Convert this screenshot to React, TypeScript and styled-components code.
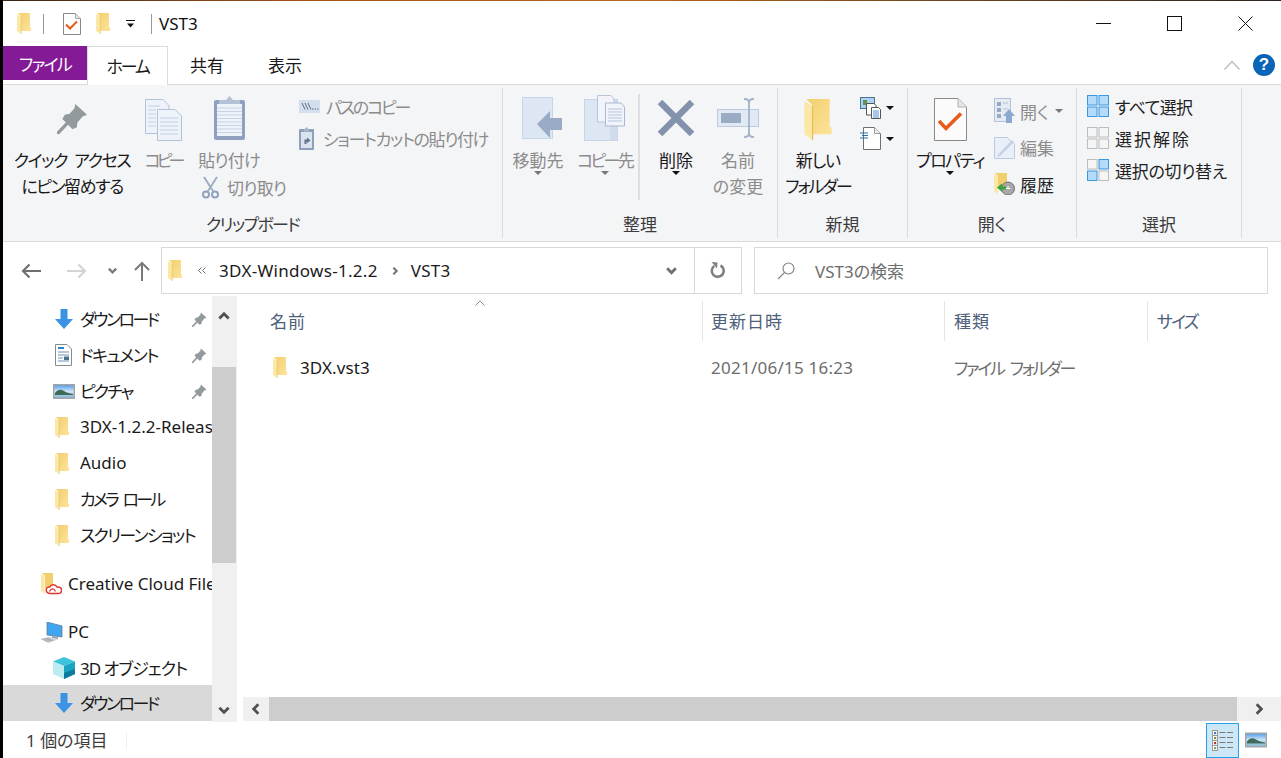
import React, { useId } from "react";
import styled, { createGlobalStyle, css } from "styled-components";

const GlobalStyle = createGlobalStyle`
  html, body {
    margin: 0;
    padding: 0;
    background: #fff;
  }
  body {
    font-family: "Noto Sans", "Noto Sans CJK JP", sans-serif;
    font-size: 17px;
    font-feature-settings: "palt" 1;
    color: #1a1a1a;
    overflow: hidden;
  }
`;

// the reference font has narrow kana, so each label carries its own tracking
const tracking = css<{ $ls?: number }>`
  letter-spacing: ${(p) => p.$ls ?? 0}px;
  word-spacing: ${(p) => ((p.$ls ?? 0) < -1 ? 4 : 0)}px;
`;

const Screen = styled.div`
  width: 1281px;
  height: 758px;
  display: flex;
  flex-direction: column;
  overflow: hidden;
  border-left: 3px solid #000;
  box-sizing: border-box;
  position: relative;
`;

const TopStrip = styled.div`
  height: 1px;
  margin-left: -3px;
  flex: none;
  background: linear-gradient(90deg, #3a2412 0%, #a5551c 25%, #b8651f 50%, #7a4a1e 70%, #2b2320 100%);
`;

const TitleBar = styled.div`
  height: 45px;
  flex: none;
  display: flex;
  align-items: center;
`;

const QuickIcons = styled.div`
  display: flex;
  align-items: center;
  padding-left: 14px;
`;

const QuickGap = styled.span<{ $w: number }>`
  width: ${(p) => p.$w}px;
  flex: none;
`;

const TitleSep = styled.span<{ $gap: number; $gapR: number }>`
  width: 1px;
  height: 20px;
  background: #9a9a9a;
  margin: 0 ${(p) => p.$gapR}px 0 ${(p) => p.$gap}px;
`;

const TitleText = styled.span`
  color: #111;
`;

const WindowButtons = styled.div`
  margin-left: auto;
  display: flex;
  height: 100%;
`;

const WindowButton = styled.div`
  width: 71px;
  display: flex;
  align-items: center;
  justify-content: center;
`;

const TabRow = styled.div`
  height: 39px;
  flex: none;
  display: flex;
  box-sizing: border-box;
  border-bottom: 1px solid #dadbdc;
  position: relative;
`;

const FileTab = styled.div<{ $ls?: number }>`
  ${tracking}
  width: 84px;
  height: 34px;
  background: #841a96;
  color: #fff;
  display: flex;
  align-items: center;
  justify-content: center;
`;

const Tab = styled.div<{ $active?: boolean; $ls?: number }>`
  ${tracking}
  width: ${(p) => (p.$active ? 81 : 78)}px;
  height: ${(p) => (p.$active ? 39 : 38)}px;
  box-sizing: border-box;
  display: flex;
  align-items: center;
  justify-content: center;
  padding-bottom: 2px;
  background: #fff;
  ${(p) => p.$active && "border: 1px solid #dadbdc; border-bottom: none;"}
`;

const TabRight = styled.div`
  margin-left: auto;
  display: flex;
  align-items: center;
  gap: 13px;
  padding-right: 6px;
`;

const HelpBadge = styled.div`
  width: 22px;
  height: 22px;
  border-radius: 50%;
  background: #0a64b8;
  color: #fff;
  font-weight: 700;
  font-size: 17px;
  display: flex;
  align-items: center;
  justify-content: center;
  font-family: "Liberation Sans", sans-serif;
`;

const Ribbon = styled.div`
  height: 157px;
  flex: none;
  display: flex;
  background: #f4f5f7;
  border-bottom: 1px solid #dadbdc;
  box-sizing: border-box;
  padding-top: 3px;
`;

const Group = styled.div<{ $w: number }>`
  width: ${(p) => p.$w}px;
  height: 150px;
  box-sizing: border-box;
  border-right: 1px solid #dadbdc;
  display: flex;
  flex-direction: column;
  flex: none;
`;

const GroupBody = styled.div`
  flex: 1;
  display: flex;
  align-items: flex-start;
`;

const GroupLabel = styled.div<{ $ls?: number }>`
  ${tracking}
  height: 26px;
  text-align: center;
  line-height: 26px;
  color: #3c3c3c;
`;

const BigButton = styled.div<{ $w: number; $ml?: number }>`
  width: ${(p) => p.$w}px;
  margin-left: ${(p) => p.$ml ?? 0}px;
  flex: none;
  display: flex;
  flex-direction: column;
  align-items: center;
`;

const BigIcon = styled.div<{ $shift?: number; $drop?: number }>`
  height: 60px;
  box-sizing: border-box;
  display: flex;
  align-items: center;
  justify-content: center;
  margin-left: ${(p) => p.$shift ?? 0}px;
  padding-top: ${(p) => p.$drop ?? 0}px;
`;

const BigLabel = styled.div<{ $off?: boolean; $ls?: number }>`
  ${tracking}
  line-height: 26px;
  height: 26px;
  white-space: nowrap;
  color: ${(p) => (p.$off ? "#8c8c8c" : "#1a1a1a")};
`;

const Caret = styled.span<{ $off?: boolean }>`
  display: block;
  width: 0;
  height: 0;
  border-left: 4px solid transparent;
  border-right: 4px solid transparent;
  border-top: 4px solid ${(p) => (p.$off ? "#777" : "#111")};
`;

const LabelCaret = styled(Caret)`
  margin-top: -3px;
`;

const OpenCaret = styled(Caret)`
  margin-left: 6px;
`;

const PasteStack = styled.div`
  width: 95px;
  margin-left: 4px;
  flex: none;
`;

const SmallColumn = styled.div<{ $top: number; $ml: number; $row: number }>`
  margin-left: ${(p) => p.$ml}px;
  padding-top: ${(p) => p.$top}px;
  display: flex;
  flex-direction: column;
  --row: ${(p) => p.$row}px;
`;

const SmallRow = styled.div<{ $off?: boolean; $iconW?: number; $ls?: number }>`
  ${tracking}
  height: var(--row, 32px);
  display: flex;
  align-items: center;
  white-space: nowrap;
  color: ${(p) => (p.$off ? "#8c8c8c" : "#1f1f1f")};
  & > svg:first-child {
    flex: none;
    margin-right: ${(p) => p.$iconW ?? 6}px;
  }
`;

const CutRow = styled(SmallRow)`
  --row: 26px;
  padding-left: 5px;
`;

const MiniCaretRow = styled.div`
  height: 31px;
  display: flex;
  align-items: center;
  gap: 5px;
`;

const VSep = styled.div`
  width: 2px;
  height: 106px;
  margin: 6px 1px 0 2px;
  background: #dddee1;
  flex: none;
`;

const NavBar = styled.div`
  height: 54px;
  flex: none;
  display: flex;
  align-items: center;
  box-sizing: border-box;
  padding-top: 3px;
`;

const NavIcon = styled.div<{ $w: number }>`
  width: ${(p) => p.$w}px;
  flex: none;
  display: flex;
  justify-content: center;
`;

const AddressBox = styled.div`
  width: 581px;
  height: 47px;
  margin-left: 6px;
  box-sizing: border-box;
  border: 1px solid #d9d9d9;
  display: flex;
  align-items: center;
  padding-left: 6px;
  flex: none;
`;

const Crumb = styled.span`
  color: #1a1a1a;
  white-space: nowrap;
  letter-spacing: 0.3px;
`;

const BreadSep = styled.span<{ $l: number; $r: number }>`
  display: flex;
  margin: 0 ${(p) => p.$r}px 0 ${(p) => p.$l}px;
`;

const AddressEnd = styled.div`
  margin-left: auto;
  height: 100%;
  display: flex;
  align-items: center;
`;

const AddressDrop = styled.div`
  width: 47px;
  height: 100%;
  display: flex;
  align-items: center;
  justify-content: center;
  box-sizing: border-box;
  border-right: 1px solid #d9d9d9;
`;

const RefreshCell = styled.div`
  width: 46px;
  display: flex;
  justify-content: center;
`;

const SearchBox = styled.div`
  width: 514px;
  height: 47px;
  margin-left: 12px;
  box-sizing: border-box;
  border: 1px solid #d9d9d9;
  display: flex;
  align-items: center;
  padding-left: 22px;
  gap: 20px;
  color: #6d6d6d;
`;

const Main = styled.div`
  height: 426px;
  flex: none;
  display: flex;
`;

const Sidebar = styled.div`
  width: 209px;
  flex: none;
  overflow: hidden;
  padding-top: 5px;
  box-sizing: border-box;
`;

const NavRow = styled.div<{ $top?: boolean; $selected?: boolean; $gap?: number }>`
  height: 36px;
  display: flex;
  align-items: center;
  padding-left: ${(p) => (p.$top ? 37 : 49)}px;
  margin-top: ${(p) => p.$gap ?? 0}px;
  background: ${(p) => (p.$selected ? "#d9d9d9" : "transparent")};
  white-space: nowrap;
  overflow: hidden;
  color: #1a1a1a;
`;

const NavSlot = styled.span<{ $folder?: boolean }>`
  width: 23px;
  margin-right: 5px;
  flex: none;
  box-sizing: border-box;
  display: flex;
  align-items: center;
  justify-content: ${(p) => (p.$folder ? "flex-start" : "center")};
  padding-left: ${(p) => (p.$folder ? 3 : 0)}px;
`;

const NavText = styled.span<{ $ls?: number }>`
  ${tracking}
  flex: 1;
  min-width: 0;
  overflow: hidden;
  padding-bottom: 2px;
`;

const NavPin = styled.span`
  flex: none;
  display: flex;
  margin-right: 5px;
`;

const VScroll = styled.div`
  width: 25px;
  flex: none;
  background: #f0f0f0;
  display: flex;
  flex-direction: column;
`;

const ScrollEnd = styled.div`
  height: 71px;
  display: flex;
  justify-content: center;
  padding: 12px 1px 0 0;
  box-sizing: border-box;
`;

const ScrollEndBottom = styled.div`
  flex: 1;
  display: flex;
  justify-content: center;
  align-items: flex-end;
  padding: 0 1px 5px 0;
`;

const VThumb = styled.div`
  height: 196px;
  width: 24px;
  background: #cdcdcd;
`;

const FilePane = styled.div`
  flex: 1;
  margin-left: 6px;
  display: flex;
  flex-direction: column;
  min-width: 0;
`;

const COLUMNS = "460px 242px 203px 1fr";

const Header = styled.div`
  display: grid;
  grid-template-columns: ${COLUMNS};
  padding-top: 5px;
  height: 50px;
  box-sizing: border-box;
  position: relative;
  flex: none;
`;

const HeaderCell = styled.div<{ $pad: number; $last?: boolean; $ls?: number }>`
  ${tracking}
  height: 40px;
  box-sizing: border-box;
  padding: 0 0 2px ${(p) => p.$pad}px;
  display: flex;
  align-items: center;
  color: #4c607a;
  ${(p) => !p.$last && "border-right: 1px solid #e5e5e5;"}
`;

const SortCaret = styled.span`
  position: absolute;
  left: 232px;
  top: 4px;
  display: flex;
`;

const FileList = styled.div`
  flex: 1;
  padding-top: 3px;
`;

const FileRow = styled.div`
  display: grid;
  grid-template-columns: ${COLUMNS};
  height: 36px;
  align-items: center;
`;

const FileName = styled.div`
  display: flex;
  align-items: center;
  padding-left: 30px;
  gap: 13px;
  color: #1a1a1a;
  letter-spacing: 0.1px;
`;

const FileMeta = styled.div<{ $pad: number; $ls?: number }>`
  ${tracking}
  padding-left: ${(p) => p.$pad}px;
  color: #6d6d6d;
  white-space: nowrap;
`;

const HScroll = styled.div`
  height: 24px;
  margin-bottom: 1px;
  flex: none;
  background: #f0f0f0;
  display: flex;
  align-items: center;
`;

const HEnd = styled.div`
  width: 26px;
  flex: none;
  display: flex;
  justify-content: center;
`;

const HEndRight = styled(HEnd)`
  flex: 1;
`;

const HThumb = styled.div`
  width: 968px;
  height: 24px;
  background: #cdcdcd;
`;

const StatusBar = styled.div`
  flex: 1;
  display: flex;
  align-items: center;
  padding-left: 23px;
  color: #3c3c3c;
`;

const StatusText = styled.span`
  width: 100px;
  flex: none;
  white-space: nowrap;
  padding-bottom: 2px;
`;

const StatusSep = styled.span`
  width: 1px;
  height: 17px;
  background: #f0f0f0;
`;

const ViewButtons = styled.div`
  margin-left: auto;
  display: flex;
  align-items: center;
  padding-right: 14px;
  gap: 6px;
  height: 100%;
`;

const ViewButton = styled.div`
  width: 33px;
  height: 35px;
  box-sizing: border-box;
  background: #cce8f6;
  border: 1px solid #26a0e8;
  display: flex;
  align-items: center;
  justify-content: center;
`;

function Folder({ w = 14, h = 21 }: { w?: number; h?: number }) {
  const id = useId();
  return (
    <svg width={w} height={h} viewBox="0 0 14 21">
      <defs>
        <linearGradient id={id} x1="0" y1="0" x2="1" y2="1">
          <stop offset="0" stopColor="#f2cf6e" />
          <stop offset="1" stopColor="#fde39a" />
        </linearGradient>
      </defs>
      <path d="M1 0H13V14.5H14V18H4V3Z" fill={`url(#${id})`} />
      <path d="M0 1 4.2 3.6V21L0 18Z" fill="#fbe7a6" />
      <path d="M4.2 3.6V21" stroke="#e5bd5a" strokeWidth=".6" />
    </svg>
  );
}

function Pin({ w = 31, h = 31, color = "#929a9e" }: { w?: number; h?: number; color?: string }) {
  return (
    <svg width={w} height={h} viewBox="0 0 32 32">
      <path d="M19 1 31 12 26.5 14 21 20 20.5 25 16 27 5.5 16.5 8 12 13 11 18 5.5Z" fill={color} />
      <path d="M10.5 21 1 31" stroke={color} strokeWidth="3.4" strokeLinecap="round" />
    </svg>
  );
}

function CopyIcon() {
  const s = "#b3c2d8";
  return (
    <svg width="37" height="42" viewBox="0 0 37 42">
      <path d="M.5.5H18L24 6.5V34.5H.5Z" fill="#eef2f9" stroke={s} />
      <path d="M12.5 10.5H30L36.5 17V41.5H12.5Z" fill="#eef2f9" stroke={s} />
      <path d="M3 7H15M3 11H11M3 15H11M3 19H11M3 23H11M3 27H11M15 19H33M15 23H33M15 27H33M15 31H33M15 35H33" stroke="#c3cfe0" />
    </svg>
  );
}

function ClipboardIcon() {
  return (
    <svg width="31" height="44" viewBox="0 0 31 44">
      <rect x="0" y="4" width="31" height="40" rx="2" fill="#90a1bf" />
      <rect x="3" y="8" width="25" height="32" fill="#eef2f9" />
      <path d="M3 12H28M3 15.500H28M3 19H28M3 22.500H28M3 26H28M3 29.500H28M3 33H28M3 36.500H28" stroke="#c8d3e4" />
      <path d="M15.500 0 19 4H26L26 8H5V4H12Z" fill="#b4c1d6" />
    </svg>
  );
}

function Scissors() {
  return (
    <svg width="17" height="23" viewBox="0 0 17 23">
      <path d="M2 1 11 15M15 1 6 15" stroke="#9dadc4" strokeWidth="2" />
      <circle cx="4" cy="18.500" r="3" fill="none" stroke="#8fa2bd" strokeWidth="2" />
      <circle cx="13" cy="18.500" r="3" fill="none" stroke="#8fa2bd" strokeWidth="2" />
    </svg>
  );
}

function PathCopy() {
  return (
    <svg width="21" height="13" viewBox="0 0 21 13">
      <rect width="21" height="13" fill="#d5deec" />
      <path d="M3 3 6 9.500M6 3 9 9.500M9 3 12 9.500" stroke="#5f6f86" />
      <path d="M13 9H14.500M15.500 9H17M18 9H19.500" stroke="#5f6f86" />
    </svg>
  );
}

function ShortcutPaste() {
  return (
    <svg width="15" height="23" viewBox="0 0 15 23">
      <rect y="2" width="15" height="21" rx="1" fill="#8e9fbc" />
      <rect x="2" y="5" width="11" height="16" fill="#dbe3ef" />
      <path d="M7.500 0 10 2.500V4.500H5V2.500Z" fill="#a9b7cd" />
      <path d="M5.500 17V12.500H8V10.500L11.500 13.500 8 16V14.500H7.500V17Z" fill="#5f708c" />
    </svg>
  );
}

function MoveTo() {
  return (
    <svg width="40" height="43" viewBox="0 0 40 43">
      <rect x=".5" y=".5" width="30" height="41" fill="#dde6f3" stroke="#c8d5e8" />
      <path d="M15 27 28 14V21H40V33H28V41Z" fill="#9aabc6" />
    </svg>
  );
}

function CopyTo() {
  return (
    <svg width="41" height="46" viewBox="0 0 41 46">
      <rect x=".5" y="4.500" width="33" height="41" fill="#dde6f3" stroke="#c8d5e8" />
      <rect x="26" y="4.500" width="7" height="41" fill="#d0dcec" />
      <path d="M13.500.5H27L30 4V27H13.500Z" fill="#f1f4fa" stroke="#b7c5da" />
      <path d="M21.500 8H37L40.500 12V31H21.500Z" fill="#f1f4fa" stroke="#a9b9d1" />
      <path d="M24 14H38M24 17H38M24 20H38M24 23H38M24 26H38" stroke="#b7c5da" />
    </svg>
  );
}

function Rename() {
  return (
    <svg width="42" height="40" viewBox="0 0 42 40">
      <rect x=".5" y="11.500" width="41" height="17" fill="#e1e9f5" stroke="#bccae0" />
      <rect x="4" y="15" width="20" height="10" fill="#9aabc6" />
      <path d="M27 1C31 1 32 2 32 6V34C32 38 31 39 27 39M37 1C33 1 32 2 32 6M32 34C32 38 33 39 37 39" fill="none" stroke="#a4b3ca" strokeWidth="1.8" />
    </svg>
  );
}

function CopySmall() {
  return (
    <svg width="21" height="22" viewBox="0 0 21 22">
      <rect x=".5" y=".5" width="14" height="11" fill="#a9d3f4" stroke="#4f6f93" />
      <rect x="3" y="3" width="4" height="5" fill="#6c8f4f" />
      <path d="M6.500 6.500H14L16 8.500V18H6.500Z" fill="#fff" stroke="#555" />
      <path d="M11.500 10.500H18.500L20.500 12.500V21.500H11.500Z" fill="#fff" stroke="#555" />
      <path d="M13 14H19M13 16H19M13 18H19M13 20H19" stroke="#4d8fd4" />
    </svg>
  );
}

function NewItem() {
  return (
    <svg width="21" height="23" viewBox="0 0 21 23">
      <path d="M3.500.5H14.500L20.500 6.500V22.500H3.500Z" fill="#fff" stroke="#6f6f6f" />
      <path d="M14.500.5V6.500H20.500" fill="#eee" stroke="#9a9a9a" />
      <path d="M0 6H8M2 8.500H8M0 11H8" stroke="#2a6fb0" />
    </svg>
  );
}

function PropertiesDoc() {
  return (
    <svg width="33" height="43" viewBox="0 0 33 43">
      <path d="M.5.5H24L32.500 9V42.500H.5Z" fill="#fbfbfb" stroke="#8a8a8a" />
      <path d="M24 .5V9H32.500" fill="#e5e5e5" stroke="#b0b0b0" />
      <path d="M5 23 12 30.500 27 15.500" fill="none" stroke="#ea5a1d" strokeWidth="3.600" />
    </svg>
  );
}

function OpenIcon() {
  return (
    <svg width="21" height="26" viewBox="0 0 21 26">
      <rect x=".5" y=".5" width="16" height="23" fill="#e4ebf5" stroke="#b3c0d5" />
      <path d="M3 4H7V8H3ZM3 10H7V14H3ZM3 16H7V20H3Z" fill="#9aa8bf" />
      <path d="M9 5H14M9 11H14" stroke="#b3c0d5" />
      <path d="M9 18 15 11 21 18H18V25H12V18Z" fill="#8fa8cf" />
    </svg>
  );
}

function EditIcon() {
  return (
    <svg width="21" height="22" viewBox="0 0 21 22">
      <path d="M.5.5H13L20.500 7V21.500H.5Z" fill="#e9eff8" stroke="#bdcae0" />
      <path d="M4 18 18 3 20 5 6 19 3 20Z" fill="#c5d1e3" />
    </svg>
  );
}

function HistoryIcon() {
  return (
    <svg width="21" height="22" viewBox="0 0 21 22">
      <path d="M1 0H13V16H4V3Z" fill="#f2cf6e" />
      <path d="M0 1 4 3V21L0 18Z" fill="#fbe7a6" />
      <circle cx="14" cy="15.500" r="6.500" fill="#a8a8a8" stroke="#6f6f6f" />
      <path d="M11.500 15.500H16.500M14 13V16" stroke="#fff" />
      <path d="M3 14.500 8 10.500V13.500H12V16.500H8V19Z" fill="#3ba43b" />
    </svg>
  );
}

function SelectGrid({ on }: { on: boolean[] }) {
  const cells: [number, number][] = [[0, 0], [11.5, 0], [0, 11.5], [11.5, 11.5]];
  return (
    <svg width="22" height="22" viewBox="0 0 22 22">
      {cells.map(([x, y], i) => (
        <rect
          key={i}
          x={x + 0.5}
          y={y + 0.5}
          width="9.500"
          height="9.500"
          fill={on[i] ? "#b5dbfb" : "#f4f5f7"}
          stroke={on[i] ? "#3a98e0" : "#bdbdbd"}
        />
      ))}
    </svg>
  );
}

function Chevron({ dir, size = 12, color = "#6f6f6f", sw = 2.6 }: { dir: "up" | "down" | "left" | "right"; size?: number; color?: string; sw?: number }) {
  const d = {
    up: "M2 9 6 5 10 9",
    down: "M2 4 6 8 10 4",
    left: "M8 2 4 6 8 10",
    right: "M4 2 8 6 4 10",
  }[dir];
  return (
    <svg width={size} height={size} viewBox="0 0 12 12">
      <path d={d} fill="none" stroke={color} strokeWidth={sw} />
    </svg>
  );
}

function ArrowLeft({ color }: { color: string }) {
  return (
    <svg width="20" height="16" viewBox="0 0 20 16">
      <path d="M20 8H2M8.500 1.500 2 8 8.500 14.500" fill="none" stroke={color} strokeWidth="2.200" />
    </svg>
  );
}

function ArrowRight({ color }: { color: string }) {
  return (
    <svg width="20" height="16" viewBox="0 0 20 16">
      <path d="M0 8H18M11.500 1.500 18 8 11.500 14.500" fill="none" stroke={color} strokeWidth="2.200" />
    </svg>
  );
}

function ArrowUp() {
  return (
    <svg width="16" height="20" viewBox="0 0 16 20">
      <path d="M8 20V2M1 9 8 2 15 9" fill="none" stroke="#7a7a7a" strokeWidth="2" />
    </svg>
  );
}

function Refresh() {
  return (
    <svg width="16" height="19" viewBox="0 0 16 19">
      <path d="M10.500 4.500A6 6 0 1 1 4.200 5" fill="none" stroke="#7f7f7f" strokeWidth="2.600" />
      <path d="M1.500 1 7.500 1.500 7 7.500Z" fill="#7f7f7f" />
    </svg>
  );
}

function Magnifier() {
  return (
    <svg width="18" height="18" viewBox="0 0 18 18">
      <circle cx="11.500" cy="6.500" r="5.500" fill="none" stroke="#7d7d7d" strokeWidth="1.100" />
      <path d="M7.500 10.500 1 17" stroke="#7d7d7d" strokeWidth="1.100" />
    </svg>
  );
}

function DownloadArrow() {
  return (
    <svg width="18" height="20" viewBox="0 0 18 20">
      <path d="M5.500 0H12.500V10H18L9 20 0 10H5.500Z" fill="#3b93e6" />
    </svg>
  );
}

function DocsIcon() {
  return (
    <svg width="17" height="22" viewBox="0 0 17 22">
      <path d="M.5.5H12L16.500 5V21.500H.5Z" fill="#fff" stroke="#8a8a8a" />
      <path d="M3 4H9" stroke="#2f80d8" strokeWidth="2" />
      <path d="M3 8H14M3 11H14M3 14H8M3 17H14" stroke="#6f8fb5" />
      <rect x="9" y="12.500" width="5" height="3.500" fill="#47708c" />
    </svg>
  );
}

function PictureIcon({ w = 22, h = 15 }: { w?: number; h?: number }) {
  const id = useId();
  return (
    <svg width={w} height={h} viewBox="0 0 22 15">
      <defs>
        <linearGradient id={id} x1="0" y1="0" x2="0" y2="1">
          <stop offset="0" stopColor="#4f9be8" />
          <stop offset=".5" stopColor="#cfe5f5" />
          <stop offset="1" stopColor="#7cb2cf" />
        </linearGradient>
      </defs>
      <rect x=".7" y=".7" width="20.600" height="13.600" fill={`url(#${id})`} stroke="#a5a5a5" strokeWidth="1.400" />
      <path d="M2 9C5 5 8 5 11 7 14 9 17 9 20 10V11H2Z" fill="#3f6a5a" />
    </svg>
  );
}

function CreativeCloud() {
  return (
    <svg width="21" height="22" viewBox="0 0 21 22">
      <path d="M1 0H12V15H4V3Z" fill="#f2cf6e" />
      <path d="M0 1 3.500 3V21L0 18Z" fill="#fbe7a6" />
      <path d="M9.500 20.500C6.500 20.500 5.200 18.800 5.200 16.800 5.200 14.800 7 13.600 8.800 14 10 11.200 14.500 10.800 16 14 18.500 13.600 20.600 15.200 20.600 17.200 20.600 19.200 19 20.500 17 20.500Z" fill="#fff" stroke="#e2352b" strokeWidth="1.500" />
      <path d="M8.500 18.500C10 15.200 12.500 15 14.500 18.500" fill="none" stroke="#e2352b" strokeWidth="1.300" />
    </svg>
  );
}

function PcIcon() {
  return (
    <svg width="23" height="21" viewBox="0 0 23 21">
      <path d="M7 0 22 4V15L7 13Z" fill="#3fa6ef" stroke="#5c7da0" strokeWidth=".8" />
      <path d="M12 14V16L18 17V15Z" fill="#9aa5ae" />
      <path d="M0 17 9 15 18 17.500 9 21Z" fill="#cfd5da" />
      <path d="M2 17.500 9 16M4 18.500 11 17M6 19.500 13 18" stroke="#8b959e" strokeWidth=".7" />
    </svg>
  );
}

function CubeIcon() {
  return (
    <svg width="22" height="22" viewBox="0 0 22 22">
      <path d="M11 0 22 4.500 11 9 0 4.500Z" fill="#3cc5da" />
      <path d="M0 4.500 11 9V22L0 17Z" fill="#bcebf0" />
      <path d="M22 4.500 11 9V22L22 17Z" fill="#1aa3c4" />
      <path d="M11 16 22 12V17L11 22Z" fill="#0e7a9d" />
    </svg>
  );
}

function DetailsIcon() {
  const colors = ["#3f78c4", "#8a8a2a", "#b8352a", "#7fa070"];
  return (
    <svg width="21" height="21" viewBox="0 0 21 21">
      {colors.map((c, i) => (
        <g key={c}>
          <rect x=".5" y={i * 5 + 0.5} width="5" height="5" fill="#fff" stroke="#9a9a9a" />
          <rect x="2" y={i * 5 + 2} width="2.200" height="2.200" fill={c} />
          <path d={`M7.500 ${i * 5 + 2.5}H13.500M15 ${i * 5 + 2.5}H21`} stroke="#7a7a7a" />
        </g>
      ))}
    </svg>
  );
}

export default function App() {
  return (
    <>
      <GlobalStyle />
      <Screen>
        <TopStrip />
        <TitleBar>
          <QuickIcons>
            <Folder />
            <TitleSep $gap={12} $gapR={19} />
            <svg width="18" height="22" viewBox="0 0 18 22">
              <path d="M.5.5H12.500L17.500 5.500V21.500H.5Z" fill="#fdfdfd" stroke="#8a8a8a" />
              <path d="M12.500.5V5.500H17.500" fill="#e5e5e5" stroke="#aaa" />
              <path d="M3 11.500 7 15.500 14 8.500" fill="none" stroke="#ea5a1d" strokeWidth="2" />
            </svg>
            <QuickGap $w={15} />
            <Folder />
            <QuickGap $w={16} />
            <svg width="9" height="8" viewBox="0 0 9 8">
              <path d="M0 .5H9" stroke="#111" />
              <path d="M1 3.500H8L4.500 7.500Z" fill="#111" />
            </svg>
          </QuickIcons>
          <TitleSep $gap={16} $gapR={7} />
          <TitleText>VST3</TitleText>
          <WindowButtons>
            <WindowButton>
              <svg width="15" height="1" viewBox="0 0 15 1">
                <rect width="15" height="1" fill="#111" />
              </svg>
            </WindowButton>
            <WindowButton>
              <svg width="15" height="15" viewBox="0 0 15 15">
                <rect x=".5" y=".5" width="14" height="14" fill="none" stroke="#111" />
              </svg>
            </WindowButton>
            <WindowButton>
              <svg width="15" height="15" viewBox="0 0 15 15">
                <path d="M.5.5 14.500 14.500M14.500.5 .5 14.500" stroke="#111" />
              </svg>
            </WindowButton>
          </WindowButtons>
        </TitleBar>
        <TabRow>
          <FileTab $ls={-1.75}>ファイル</FileTab>
          <Tab $active $ls={-2.3}>ホーム</Tab>
          <Tab>共有</Tab>
          <Tab>表示</Tab>
          <TabRight>
            <svg width="16" height="10" viewBox="0 0 16 10">
              <path d="M.5 9.500 8 1.500 15.500 9.500" fill="none" stroke="#bdbdbd" strokeWidth="1.500" />
            </svg>
            <HelpBadge>?</HelpBadge>
          </TabRight>
        </TabRow>
        <Ribbon>
          <Group $w={500}>
            <GroupBody>
              <BigButton $w={122} $ml={8}>
                <BigIcon><Pin /></BigIcon>
                <BigLabel $ls={-1.4}>クイック アクセス</BigLabel>
                <BigLabel $ls={-1.5}>にピン留めする</BigLabel>
              </BigButton>
              <BigButton $w={60}>
                <BigIcon $drop={4}><CopyIcon /></BigIcon>
                <BigLabel $off $ls={-4}>コピー</BigLabel>
              </BigButton>
              <PasteStack>
                <BigButton $w={64}>
                  <BigIcon><ClipboardIcon /></BigIcon>
                  <BigLabel $off $ls={-0.75}>貼り付け</BigLabel>
                </BigButton>
                <CutRow $off $iconW={8} $ls={-0.75}>
                  <Scissors />
                  切り取り
                </CutRow>
              </PasteStack>
              <SmallColumn $top={2} $ml={7} $row={32}>
                <SmallRow $off $ls={-2.2}>
                  <PathCopy />
                  パスのコピー
                </SmallRow>
                <SmallRow $off $iconW={9} $ls={-1.4}>
                  <ShortcutPaste />
                  ショートカットの貼り付け
                </SmallRow>
              </SmallColumn>
            </GroupBody>
            <GroupLabel $ls={-1.7}>クリップボード</GroupLabel>
          </Group>
          <Group $w={275}>
            <GroupBody>
              <BigButton $w={70}>
                <BigIcon $shift={8}><MoveTo /></BigIcon>
                <BigLabel $off>移動先</BigLabel>
                <LabelCaret $off />
              </BigButton>
              <BigButton $w={63}>
                <BigIcon><CopyTo /></BigIcon>
                <BigLabel $off $ls={-2.7}>コピー先</BigLabel>
                <LabelCaret $off />
              </BigButton>
              <VSep />
              <BigButton $w={70}>
                <BigIcon>
                  <svg width="38" height="38" viewBox="0 0 38 38">
                    <path d="M3 3 35 35M35 3 3 35" stroke="#8493ad" strokeWidth="6.500" />
                  </svg>
                </BigIcon>
                <BigLabel>削除</BigLabel>
                <LabelCaret />
              </BigButton>
              <BigButton $w={54}>
                <BigIcon><Rename /></BigIcon>
                <BigLabel $off>名前</BigLabel>
                <BigLabel $off>の変更</BigLabel>
              </BigButton>
            </GroupBody>
            <GroupLabel>整理</GroupLabel>
          </Group>
          <Group $w={130}>
            <GroupBody>
              <BigButton $w={80}>
                <BigIcon $drop={3}><Folder w={28} h={41} /></BigIcon>
                <BigLabel $ls={-1}>新しい</BigLabel>
                <BigLabel $ls={-2}>フォルダー</BigLabel>
              </BigButton>
              <SmallColumn $top={4} $ml={2} $row={31}>
                <MiniCaretRow>
                  <CopySmall />
                  <Caret />
                </MiniCaretRow>
                <MiniCaretRow>
                  <NewItem />
                  <Caret />
                </MiniCaretRow>
              </SmallColumn>
            </GroupBody>
            <GroupLabel>新規</GroupLabel>
          </Group>
          <Group $w={169}>
            <GroupBody>
              <BigButton $w={84}>
                <BigIcon $drop={2}><PropertiesDoc /></BigIcon>
                <BigLabel $ls={-1.6}>プロパティ</BigLabel>
                <LabelCaret />
              </BigButton>
              <SmallColumn $top={5} $ml={2} $row={36.5}>
                <SmallRow $off $iconW={5}>
                  <OpenIcon />
                  開く
                  <OpenCaret $off />
                </SmallRow>
                <SmallRow $off $iconW={5}>
                  <EditIcon />
                  編集
                </SmallRow>
                <SmallRow $iconW={5}>
                  <HistoryIcon />
                  履歴
                </SmallRow>
              </SmallColumn>
            </GroupBody>
            <GroupLabel>開く</GroupLabel>
          </Group>
          <Group $w={165}>
            <GroupBody>
              <SmallColumn $top={2} $ml={10} $row={32}>
                <SmallRow $ls={-0.6}>
                  <SelectGrid on={[true, true, true, true]} />
                  すべて選択
                </SmallRow>
                <SmallRow $ls={2}>
                  <SelectGrid on={[false, false, false, false]} />
                  選択解除
                </SmallRow>
                <SmallRow $ls={-0.3}>
                  <SelectGrid on={[false, true, true, false]} />
                  選択の切り替え
                </SmallRow>
              </SmallColumn>
            </GroupBody>
            <GroupLabel>選択</GroupLabel>
          </Group>
        </Ribbon>
        <NavBar>
          <NavIcon $w={56}><ArrowLeft color="#6f6f6f" /></NavIcon>
          <NavIcon $w={36}><ArrowRight color="#d4d4d4" /></NavIcon>
          <NavIcon $w={34}><Chevron dir="down" size={11} color="#7a7a7a" /></NavIcon>
          <NavIcon $w={26}><ArrowUp /></NavIcon>
          <AddressBox>
            <Folder />
            <BreadSep $l={16} $r={13}>
              <svg width="8" height="7" viewBox="0 0 8 7">
                <path d="M3.500.5.5 3.500 3.500 6.500M7.500.5 4.500 3.500 7.500 6.500" fill="none" stroke="#6f6f6f" />
              </svg>
            </BreadSep>
            <Crumb>3DX-Windows-1.2.2</Crumb>
            <BreadSep $l={12} $r={11}><Chevron dir="right" size={10} color="#6f6f6f" sw={2.4} /></BreadSep>
            <Crumb>VST3</Crumb>
            <AddressEnd>
              <AddressDrop><Chevron dir="down" size={13} color="#6f6f6f" /></AddressDrop>
              <RefreshCell><Refresh /></RefreshCell>
            </AddressEnd>
          </AddressBox>
          <SearchBox>
            <Magnifier />
            VST3の検索
          </SearchBox>
        </NavBar>
        <Main>
          <Sidebar>
            <NavRow>
              <NavSlot><DownloadArrow /></NavSlot>
              <NavText $ls={-2.5}>ダウンロード</NavText>
              <NavPin><Pin w={15} h={15} /></NavPin>
            </NavRow>
            <NavRow>
              <NavSlot><DocsIcon /></NavSlot>
              <NavText $ls={-1.5}>ドキュメント</NavText>
              <NavPin><Pin w={15} h={15} /></NavPin>
            </NavRow>
            <NavRow>
              <NavSlot><PictureIcon /></NavSlot>
              <NavText $ls={-2}>ピクチャ</NavText>
              <NavPin><Pin w={15} h={15} /></NavPin>
            </NavRow>
            <NavRow>
              <NavSlot $folder><Folder /></NavSlot>
              <NavText>3DX-1.2.2-Release</NavText>
            </NavRow>
            <NavRow>
              <NavSlot $folder><Folder /></NavSlot>
              <NavText>Audio</NavText>
            </NavRow>
            <NavRow>
              <NavSlot $folder><Folder /></NavSlot>
              <NavText $ls={-2.8}>カメラ ロール</NavText>
            </NavRow>
            <NavRow>
              <NavSlot $folder><Folder /></NavSlot>
              <NavText $ls={-1.7}>スクリーンショット</NavText>
            </NavRow>
            <NavRow $top $gap={13}>
              <NavSlot><CreativeCloud /></NavSlot>
              <NavText>Creative Cloud Files</NavText>
            </NavRow>
            <NavRow $top $gap={12}>
              <NavSlot><PcIcon /></NavSlot>
              <NavText>PC</NavText>
            </NavRow>
            <NavRow>
              <NavSlot><CubeIcon /></NavSlot>
              <NavText $ls={-1}>3D オブジェクト</NavText>
            </NavRow>
            <NavRow $selected $gap={-1}>
              <NavSlot><DownloadArrow /></NavSlot>
              <NavText $ls={-2.5}>ダウンロード</NavText>
            </NavRow>
          </Sidebar>
          <VScroll>
            <ScrollEnd><Chevron dir="up" size={14} color="#505050" sw={2.4} /></ScrollEnd>
            <VThumb />
            <ScrollEndBottom><Chevron dir="down" size={14} color="#505050" sw={2.4} /></ScrollEndBottom>
          </VScroll>
          <FilePane>
            <Header>
              <HeaderCell $pad={27} $ls={1}>名前</HeaderCell>
              <HeaderCell $pad={8} $ls={1}>更新日時</HeaderCell>
              <HeaderCell $pad={9} $ls={1}>種類</HeaderCell>
              <HeaderCell $pad={9} $last $ls={-2}>サイズ</HeaderCell>
              <SortCaret>
                <svg width="10" height="6" viewBox="0 0 10 6">
                  <path d="M.5 5.500 5 1 9.500 5.500" fill="none" stroke="#8a8a8a" />
                </svg>
              </SortCaret>
            </Header>
            <FileList>
              <FileRow>
                <FileName>
                  <Folder />
                  3DX.vst3
                </FileName>
                <FileMeta $pad={8} $ls={0.25}>2021/06/15 16:23</FileMeta>
                <FileMeta $pad={9} $ls={-2.3}>ファイル フォルダー</FileMeta>
              </FileRow>
            </FileList>
            <HScroll>
              <HEnd><Chevron dir="left" size={14} color="#505050" sw={2.4} /></HEnd>
              <HThumb />
              <HEndRight><Chevron dir="right" size={14} color="#505050" sw={2.4} /></HEndRight>
            </HScroll>
          </FilePane>
        </Main>
        <StatusBar>
          <StatusText>1 個の項目</StatusText>
          <StatusSep />
          <ViewButtons>
            <ViewButton><DetailsIcon /></ViewButton>
            <PictureIcon w={22} h={16} />
          </ViewButtons>
        </StatusBar>
      </Screen>
    </>
  );
}
